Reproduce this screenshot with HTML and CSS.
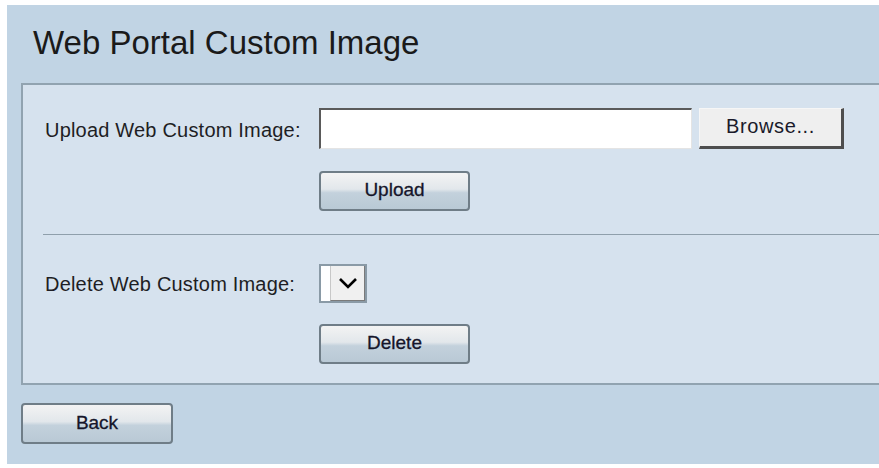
FILE: index.html
```html
<!DOCTYPE html>
<html lang="en">
<head>
<meta charset="utf-8">
<title>Web Portal Custom Image</title>
<link rel="stylesheet" href="styles.css">
</head>
<body>
<div class="page">
  <h1 class="title">Web Portal Custom Image</h1>
  <div class="panel">
    <div class="row">
      <span class="label">Upload Web Custom Image:</span>
      <div class="file">
        <input class="file-path" type="text" value="">
        <button class="browse" type="button">Browse...</button>
      </div>
    </div>
    <div class="row row-action">
      <span class="label"></span>
      <button class="btn" type="button">Upload</button>
    </div>
    <hr class="divider">
    <div class="row row-delete">
      <span class="label">Delete Web Custom Image:</span>
      <span class="select">
        <span class="select-value"></span>
        <span class="select-arrow">
          <svg width="22" height="14" viewBox="0 0 22 14"><path d="M3 3 L11 11 L19 3" fill="none" stroke="#000" stroke-width="2.6"/></svg>
        </span>
      </span>
    </div>
    <div class="row row-action row-last">
      <span class="label"></span>
      <button class="btn" type="button">Delete</button>
    </div>
  </div>
  <div class="footer">
    <button class="btn" type="button">Back</button>
  </div>
</div>
</body>
</html>
```
FILE: styles.css
```css
html, body {
  margin: 0;
  padding: 0;
  background: #ffffff;
}

body {
  font-family: "Liberation Sans", Arial, sans-serif;
  color: #1b1b1b;
}

.page {
  margin: 5px 0 4px 7px;
  height: 459px;
  background: #c1d4e4;
  display: flex;
  flex-direction: column;
  box-sizing: border-box;
  padding-top: 19px;
}

.title {
  margin: 0 0 21px 26px;
  font-size: 33px;
  font-weight: normal;
  line-height: 38px;
  color: #1a1a1a;
}

.panel {
  margin-left: 14px;
  background: #d6e2ee;
  border: 2px solid #91a3b0;
  border-right: none;
  padding: 22px 0 19px 0;
}

.row {
  display: flex;
  align-items: center;
}

.label {
  width: 296px;
  padding-left: 22px;
  box-sizing: border-box;
  font-size: 20px;
  letter-spacing: 0.2px;
  color: #1e1e24;
  flex-shrink: 0;
  padding-top: 4px;
}

.file {
  display: flex;
  align-items: center;
  gap: 7px;
}

.file-path {
  width: 373px;
  height: 41px;
  box-sizing: border-box;
  margin: 0;
  background: #ffffff;
  border-style: solid;
  border-width: 2px 1px 1px 2px;
  border-color: #5a5a5a #e4e4e4 #e4e4e4 #5a5a5a;
  font: inherit;
}

.browse {
  width: 145px;
  height: 41px;
  margin: 0;
  margin-top: 1px;
  box-sizing: border-box;
  background: #efefef;
  border-style: solid;
  border-width: 1px 3px 3px 1px;
  border-color: #f6f6f6 #4e4e4e #4e4e4e #f6f6f6;
  font-family: "Liberation Sans", Arial, sans-serif;
  font-size: 20px;
  letter-spacing: 0.6px;
  color: #1a1a2a;
  padding: 0 0 2px 0;
}

.btn {
  width: 151px;
  height: 40px;
  margin: 0;
  box-sizing: border-box;
  border: 2px solid #6f7d87;
  border-radius: 4px;
  background: linear-gradient(to bottom, #f3f3f3 0%, #e2e7eb 45%, #c3d1dc 55%, #b9c9d5 100%);
  font-family: "Liberation Sans", Arial, sans-serif;
  font-size: 19px;
  color: #15152a;
  padding: 0 0 2px 0;
  -webkit-text-stroke: 0.3px #15152a;
}

.row-action {
  margin-top: 22px;
}

.divider {
  margin: 23px 0 29px 20px;
  border: none;
  height: 1px;
  background: #8f9fab;
}

.row-delete .label {
  padding-top: 2px;
}

.select {
  display: flex;
  width: 48px;
  height: 39px;
  box-sizing: border-box;
  border: 2px solid #8a9aa6;
  background: #ffffff;
}

.select-value {
  width: 9px;
  background: #ffffff;
}

.select-arrow {
  flex: 1;
  display: flex;
  align-items: center;
  justify-content: center;
  background: #f0f0f0;
  border-left: 1px solid #c8c8c8;
  border-right: 1px solid #7a7a7a;
  border-bottom: 1px solid #7a7a7a;
}

.row-last {
  margin-top: 21px;
}

.footer {
  margin-top: 18px;
  padding-left: 14px;
}

.footer .btn {
  height: 41px;
  width: 152px;
}
```
